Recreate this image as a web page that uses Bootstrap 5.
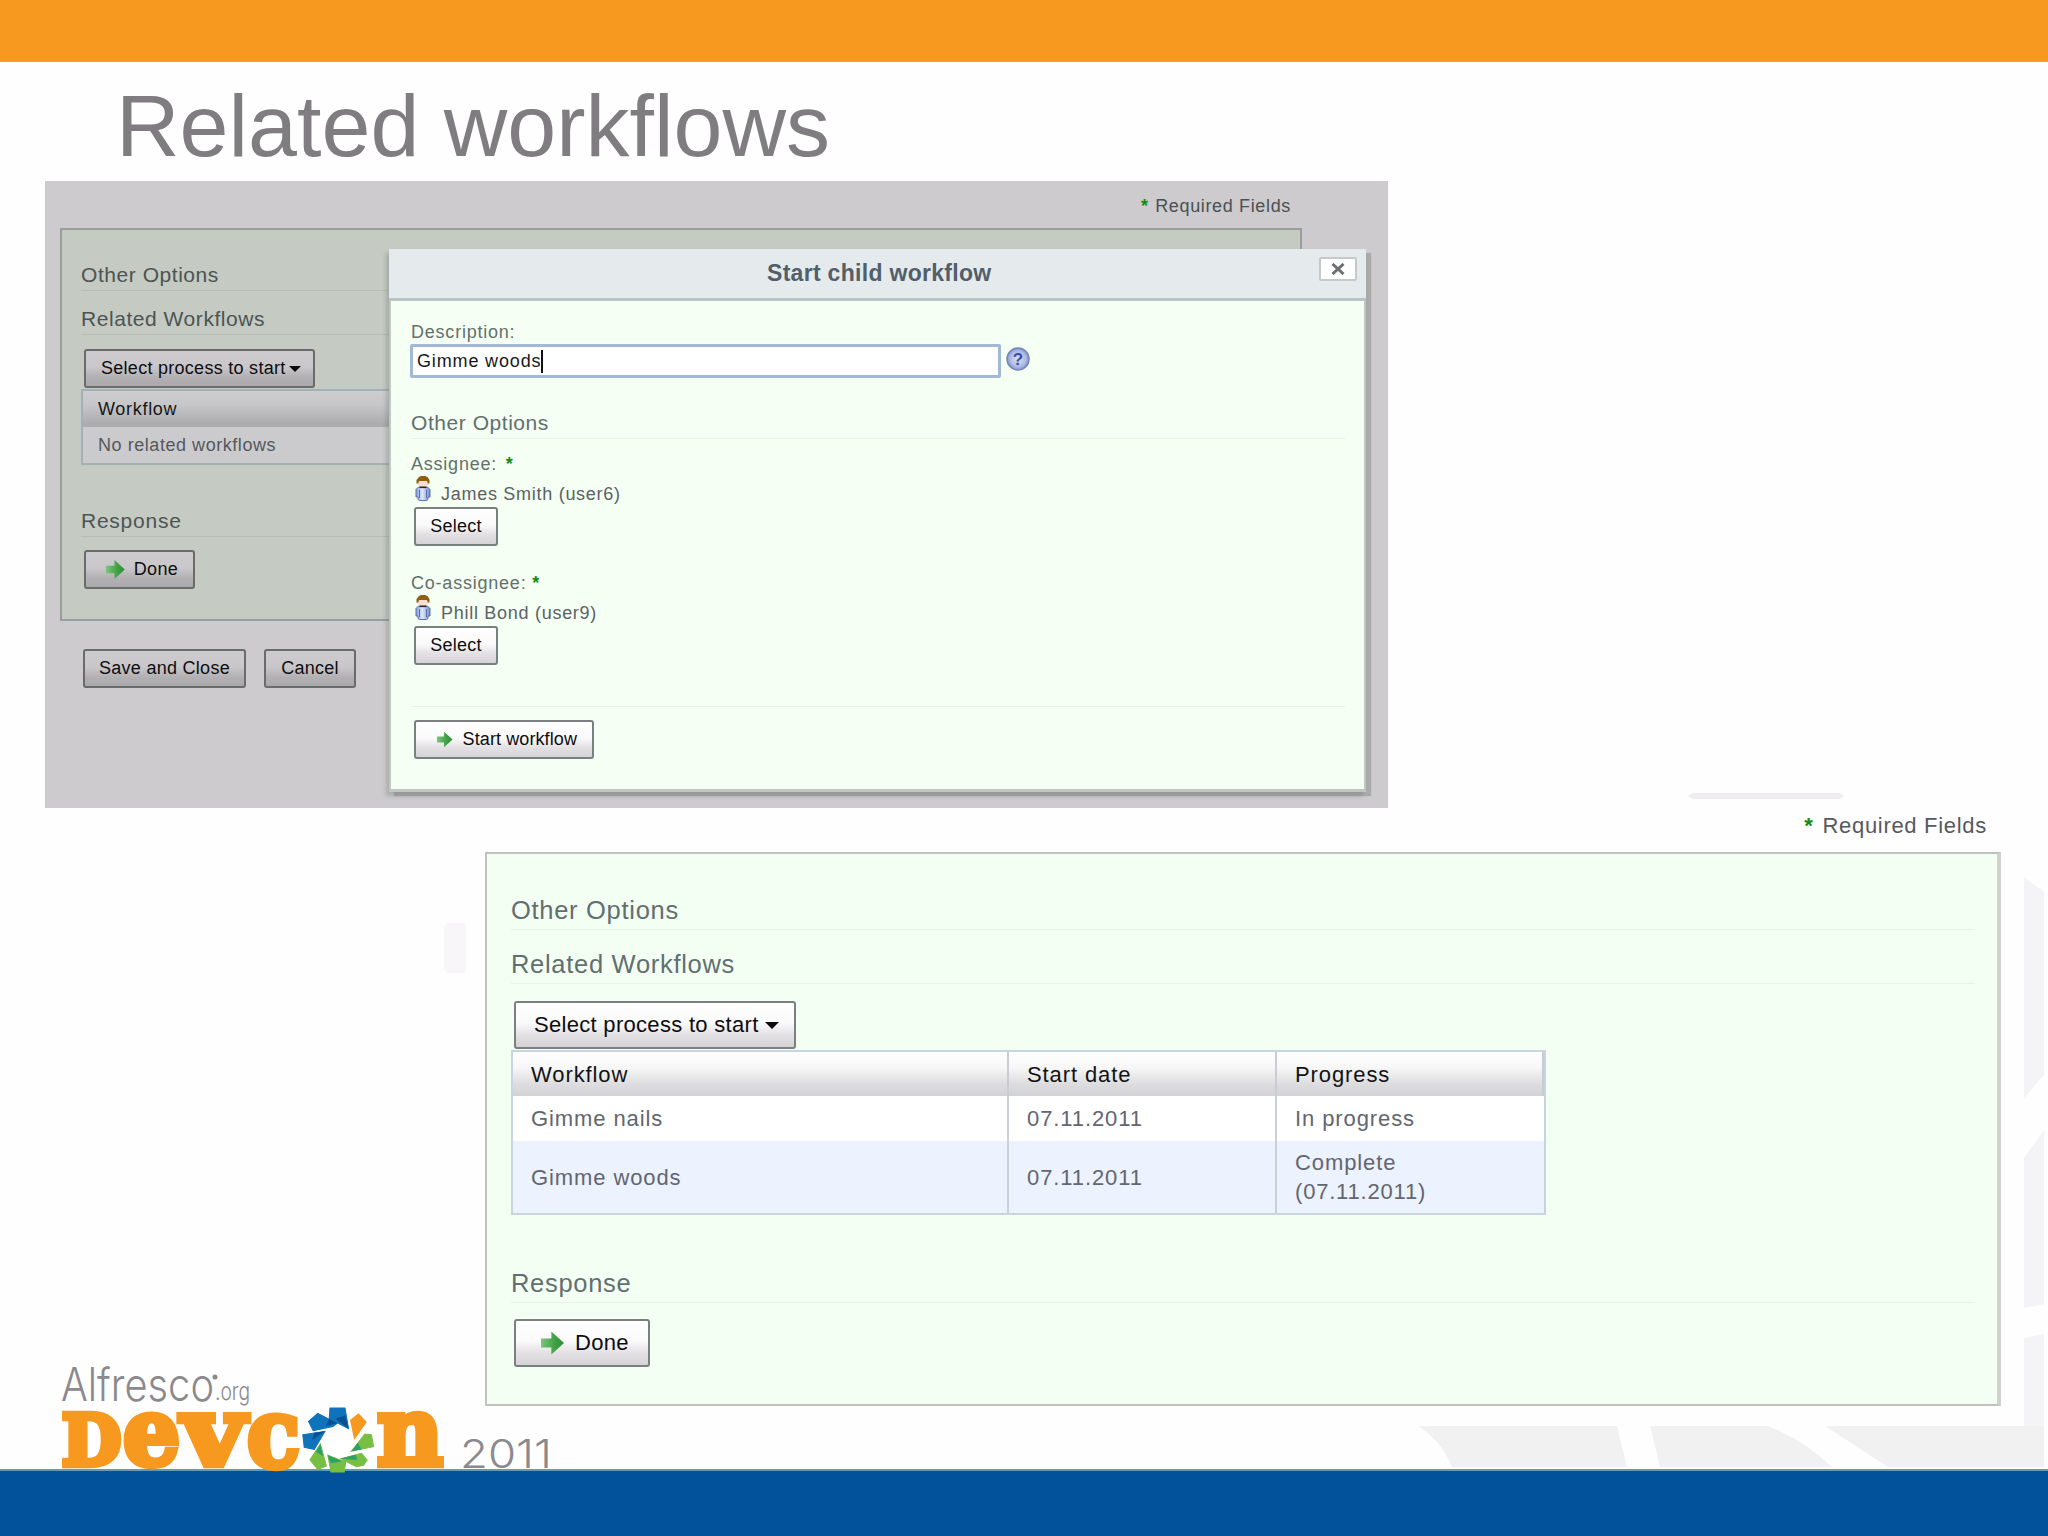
<!DOCTYPE html>
<html lang="en">
<head>
<meta charset="utf-8">
<title>Related workflows</title>
<link href="https://cdn.jsdelivr.net/npm/bootstrap@5.3.0/dist/css/bootstrap.min.css" rel="stylesheet">
<style>
body{font-family:"Liberation Sans",Arial,sans-serif;background:#fefefe;width:2048px;height:1536px;overflow:hidden;color:#5b6265;font-size:18px;line-height:24px}
.topbar{height:62px;background:#f7981f;border-bottom:1px solid #dca65c}
.slide-title{font-size:88px;line-height:100px;color:#7f7d80;margin:14px 0 0 116px;height:105px;font-weight:400;white-space:nowrap}
.bottombar{height:67px;background:#02519b;border-top:2px solid #5d9dbb}
.backdrop,.brand{position:absolute;left:0;top:0;pointer-events:none}
.shot{width:1343px;height:627px;background:#cdcbce;margin-left:45px}
.req{height:47px;padding:13px 97px 0 0;letter-spacing:.65px;color:#4b5052}
.star{color:#128a16;font-weight:700;margin-right:1px}
.lbl .star{margin-left:3px}
.panel-dim{margin-left:15px;width:1242px;height:393px;border:2px solid #989f9b;background:#c5cac3;padding:30px 16px 0 19px}
.sec{font-size:21px;line-height:30px;font-weight:400;margin:0;letter-spacing:.55px;color:#4c5453;border-bottom:1px solid #b7bdb7;white-space:nowrap}
.abtn{height:39px;padding:0 15px;border:2px solid #7b7f81;border-radius:3px;background:linear-gradient(#fff 0%,#fbfafb 45%,#e3e1e4 72%,#d5d3d6 100%);color:#0d0d0f;font-size:18px;line-height:35px;letter-spacing:.28px;white-space:nowrap}
.dim .abtn{background:linear-gradient(#cdcbce 0%,#c9c7ca 45%,#b2b0b3 75%,#aaa8ab 100%);border-color:#686d6b}
.caret{width:0;height:0;border:solid transparent;border-width:6px 6px 0;border-top-color:#0b0b0d}
.grid-dim{border:2px solid #a4b0b8;width:800px;background:#cbcbce;letter-spacing:.55px;margin-top:1px}
.grid-dim .gh{height:36px;padding-left:15px;line-height:36px;background:linear-gradient(#cdcdd0 0%,#c6c6c9 40%,#adadb0 90%);color:#151618;letter-spacing:.7px}
.grid-dim .gr{height:36px;padding-left:15px;line-height:36px;color:#55585c}
.dlg{position:absolute;left:344px;top:68px;width:977px;height:543px;border:solid #c0c6c2;border-width:0 2px 3px;background:#f5fff3;box-shadow:5px 4px 1px 0 rgba(105,113,107,.36),-3px 4px 4px 0 rgba(95,103,97,.3)}
.dlg-head{height:52px;margin:0 -2px;background:#e5eaec;border-bottom:3px solid #bcc3c4}
.dlg-title{font-size:23px;font-weight:700;letter-spacing:.3px;color:#525f6a;line-height:49px;margin:0;padding-left:378px}
.xbtn{width:38px;height:24px;margin:8px 9px 0 0;border:2px solid #c5c9cc;border-radius:2px;background:#fff}
.dlg-body{padding:19px 19px 0 20px}
.dlg .sec,.live .sec{color:#626f70;border-color:#e9f2e9}
.lbl{letter-spacing:.78px;color:#63706a}
.inp{width:591px;height:34px;border:3px solid #a3b8d6;border-radius:2px;background:#fff;color:#17181b;padding:0 0 0 4px;line-height:28px;letter-spacing:.85px;margin-left:-1px}
.cursor{width:2px;height:23px;background:#111}
.person{height:31px;padding:0 0 0 4px;letter-spacing:.72px}
.person span{line-height:24px;margin:6px 0 0 10px}
.hr-soft{height:1px;background:#e7f1e8}
.req2{height:44px;padding:6px 61px 0 0;font-size:22px;letter-spacing:.7px;color:#56595f}
.live{margin-left:485px;width:1516px;height:554px;border:2px solid #c1c2c0;border-right:4px solid #cdd3cc;background:#f4fff3;padding:38px 22px 0 24px}
.live .sec{font-size:25.5px;line-height:37px;letter-spacing:.7px}
.live .abtn{height:48px;font-size:22px;line-height:44px;padding:0 18px;letter-spacing:.3px}
.live .caret{border-width:7px 7px 0}
.grid-live{width:1035px;table-layout:fixed;border:2px solid #c7d4e2;border-collapse:separate;border-spacing:0;background:#fff;font-size:22px;line-height:29px;letter-spacing:.9px;margin:0}
.grid-live th{font-weight:400;color:#121315;height:44px;padding:0 0 0 18px;background:linear-gradient(#fff 0%,#f7f7f8 35%,#dcdcde 75%,#d3d3d5 100%);border-right:2px solid #c9ccd1}
.grid-live td{color:#62666f;height:45px;padding:0 0 0 18px;border-right:2px solid #cbcfd6;vertical-align:middle}
.grid-live td:last-child{border-right:0}
.grid-live tr.alt td{background:#edf2ff;height:72px}
.tight{letter-spacing:.8px}
</style>
<script src="https://cdn.jsdelivr.net/npm/bootstrap@5.3.0/dist/js/bootstrap.bundle.min.js"></script>
</head>
<body class="position-relative d-flex flex-column">
<svg width="0" height="0" class="position-absolute">
  <defs>
    <linearGradient id="ga" x1="0" x2="1"><stop offset="0" stop-color="#7cc47c"/><stop offset=".6" stop-color="#3fa244"/><stop offset="1" stop-color="#2f8c35"/></linearGradient>
    <linearGradient id="gb" x1="0" x2="1"><stop offset="0" stop-color="#7f9cd6"/><stop offset=".45" stop-color="#dfe8fa"/><stop offset="1" stop-color="#6f8cc9"/></linearGradient>
    <radialGradient id="gq"><stop offset="0" stop-color="#dce3f8"/><stop offset=".7" stop-color="#aebbe6"/><stop offset="1" stop-color="#8797cc"/></radialGradient>
    <symbol id="arrow" viewBox="0 0 20 20"><path d="M0 6h9V0l11 10L9 20v-6H0z" fill="url(#ga)"/></symbol>
    <symbol id="man" viewBox="0 0 16 25">
      <path d="M1 13.500 3.500 11h9l2.500 2.500V21h-2v2.500l-1.500 1h-7L3 23.500V21H1z" fill="url(#gb)" stroke="#5a70ab" stroke-width="1"/>
      <path d="M4.500 14v8M11.500 14v8" stroke="#5870ae"/>
      <path d="M2.500 5h11v3l-2 3h-7l-2-3z" fill="#fbdcd0"/>
      <path d="M4.500 11.300h7" stroke="#262626" stroke-width="1.600"/>
      <path d="M1.500 7.500V4L4 1 6 0h4l2.500 1L14.500 4v3.500h-1.700L12 5H4L3.200 7.500z" fill="#8d5f10"/>
    </symbol>
  </defs>
</svg>
<svg class="backdrop" width="2048" height="1536">
  <path d="M1692 793h148l4 3-4 3h-148l-4-3z" fill="#efedf0"/>
  <rect x="444" y="923" width="22" height="50" rx="5" fill="#f8f6f9"/>
  <path d="M2024 877l20 15v183l-20 23zM2024 1158l20-28v174l-20 4zM2024 1338l20-4v132h-20z" fill="#f4f3f5"/>
  <path d="M1418 1426h199l10 41h-175c-8-20-20-32-34-41zM1650 1426h118q36 14 64 41h-172zM1825 1426h219v41h-156z" fill="#f2f1f2"/>
</svg>
<header class="topbar flex-shrink-0"></header>
<h1 class="slide-title flex-shrink-0">Related workflows</h1>

<section class="shot position-relative flex-shrink-0">
  <div class="dim">
    <div class="req text-end"><span class="star">*</span> Required Fields</div>
    <div class="panel-dim">
      <h2 class="sec">Other Options</h2>
      <h2 class="sec" style="margin-top:13px">Related Workflows</h2>
      <div class="d-flex" style="margin:14px 0 0 3px"><button class="abtn d-flex align-items-center" style="width:231px">Select process to start<i class="caret" style="margin-left:3px"></i></button></div>
      <div class="grid-dim"><div class="gh">Workflow</div><div class="gr">No related workflows</div></div>
      <h2 class="sec" style="margin-top:41px;letter-spacing:.75px">Response</h2>
      <div class="d-flex" style="margin:13px 0 0 3px"><button class="abtn d-flex align-items-center" style="width:111px;padding-left:20px"><svg width="19" height="19" style="margin-right:9px"><use href="#arrow"/></svg>Done</button></div>
    </div>
    <div class="d-flex" style="margin:28px 0 0 38px;gap:18px"><button class="abtn" style="width:163px;padding:0">Save and Close</button><button class="abtn" style="width:92px;padding:0">Cancel</button></div>
  </div>

  <div class="dlg">
    <div class="dlg-head d-flex justify-content-between align-items-start">
      <h3 class="dlg-title">Start child workflow</h3>
      <div class="xbtn d-flex align-items-center justify-content-center"><svg width="14" height="12" viewBox="0 0 14 12"><path d="M1.500 1l11 10M12.500 1l-11 10" stroke="#6d7073" stroke-width="3"/></svg></div>
    </div>
    <div class="dlg-body">
      <div class="lbl">Description:</div>
      <div class="d-flex align-items-center">
        <div class="inp d-flex align-items-center">Gimme woods<i class="cursor"></i></div>
        <svg width="24" height="24" class="mb-1" style="margin-left:5px"><circle cx="12" cy="12" r="11" fill="url(#gq)" stroke="#7786b8" stroke-width="1.500"/><text x="12" y="18" font-size="17" font-weight="700" text-anchor="middle" fill="#3550a4">?</text></svg>
      </div>
      <h2 class="sec" style="margin-top:30px">Other Options</h2>
      <div class="lbl" style="margin-top:13px">Assignee: <span class="star">*</span></div>
      <div class="person d-flex"><svg width="16" height="25"><use href="#man"/></svg><span>James Smith (user6)</span></div>
      <div class="d-flex" style="margin-left:3px"><button class="abtn" style="width:84px;padding:0">Select</button></div>
      <div class="lbl" style="margin-top:25px">Co-assignee: <span class="star ms-0">*</span></div>
      <div class="person d-flex"><svg width="16" height="25"><use href="#man"/></svg><span>Phill Bond (user9)</span></div>
      <div class="d-flex" style="margin-left:3px"><button class="abtn" style="width:84px;padding:0">Select</button></div>
      <div class="hr-soft" style="margin-top:41px"></div>
      <div class="d-flex" style="margin:13px 0 0 3px"><button class="abtn d-flex align-items-center" style="width:180px;padding-left:21px;letter-spacing:.1px"><svg width="19" height="19" style="margin-right:10px"><use href="#arrow"/></svg>Start workflow</button></div>
    </div>
  </div>
</section>

<section class="flex-shrink-0">
  <div class="req2 text-end"><span class="star" style="margin-right:2px">*</span> Required Fields</div>
  <div class="live">
    <h2 class="sec">Other Options</h2>
    <h2 class="sec" style="margin-top:16px">Related Workflows</h2>
    <div class="d-flex" style="margin:17px 0 1px 3px"><button class="abtn d-flex align-items-center" style="width:282px">Select process to start<i class="caret" style="margin-left:6px"></i></button></div>
    <table class="grid-live">
      <colgroup><col style="width:496px"><col style="width:268px"><col></colgroup>
      <tr><th>Workflow</th><th>Start date</th><th>Progress</th></tr>
      <tr><td>Gimme nails</td><td>07.11.2011</td><td>In progress</td></tr>
      <tr class="alt"><td>Gimme woods</td><td>07.11.2011</td><td>Complete<br><span class="tight">(07.11.2011)</span></td></tr>
    </table>
    <h2 class="sec" style="margin-top:50px">Response</h2>
    <div class="d-flex" style="margin:16px 0 0 3px"><button class="abtn d-flex align-items-center" style="width:136px;padding-left:25px"><svg width="23" height="24" style="margin-right:11px"><use href="#arrow"/></svg>Done</button></div>
  </div>
</section>
<footer class="bottombar mt-auto flex-shrink-0"></footer>

<svg class="brand" width="640" height="1536">
  <g fill="#8b898d" font-family="Inter" font-weight="300">
    <text x="61" y="1401" font-size="46" textLength="153" lengthAdjust="spacingAndGlyphs">Alfresco</text>
    <circle cx="215" cy="1377" r="2.500"/>
    <text x="215" y="1400" font-size="25" textLength="35" lengthAdjust="spacingAndGlyphs">.org</text>
    <text x="460" y="1468" font-size="40" textLength="92" lengthAdjust="spacingAndGlyphs">2011</text>
  </g>
  <text fill="#f7981f" stroke="#f7981f" stroke-width="6.500" font-family="DejaVu Serif" font-weight="700"><tspan x="62" y="1465" font-size="70" textLength="59" lengthAdjust="spacingAndGlyphs">D</tspan><tspan x="123" y="1465" font-size="94" textLength="57" lengthAdjust="spacingAndGlyphs">e</tspan><tspan x="182" y="1465" font-size="96" textLength="63" lengthAdjust="spacingAndGlyphs">v</tspan><tspan x="247" y="1467" font-size="96" textLength="53" lengthAdjust="spacingAndGlyphs">c</tspan><tspan x="377" y="1465" font-size="95" textLength="66" lengthAdjust="spacingAndGlyphs">n</tspan></text>
  <g transform="translate(40 1340) scale(.3571 .3333)">
    <circle cx="834" cy="299" r="88" fill="#fff"/>
    <path d="M812 204h42l10 62-54-30zM778 220l54 30-12 10-55 12-13-28zM736 284l62-10-30 54-28-6z" fill="#0e73ba" stroke="#0e73ba" stroke-width="3"/>
    <path d="M828 236l36 30-10-40zM800 258l32-8-22-14zM762 300l36-26-30 4z" fill="#09508f"/>
    <path d="M785 312l17 66-24 10-22-28zM806 346l50 20-4 30h-37zM842 356l58-16 16 20-10 16-20 4zM872 334l38-52 18 2 6 36z" fill="#76bf43" stroke="#76bf43" stroke-width="3"/>
    <path d="M785 312l8 36-20-12zM806 346l40 18-32 6zM842 356l42-12 4 16zM872 334l18-26 10 20z" fill="#2f9f68"/>
    <path d="M880 300l-12-60 24-20 23 26z" fill="#f7981f"/>
  </g>
</svg>
</body>
</html>
